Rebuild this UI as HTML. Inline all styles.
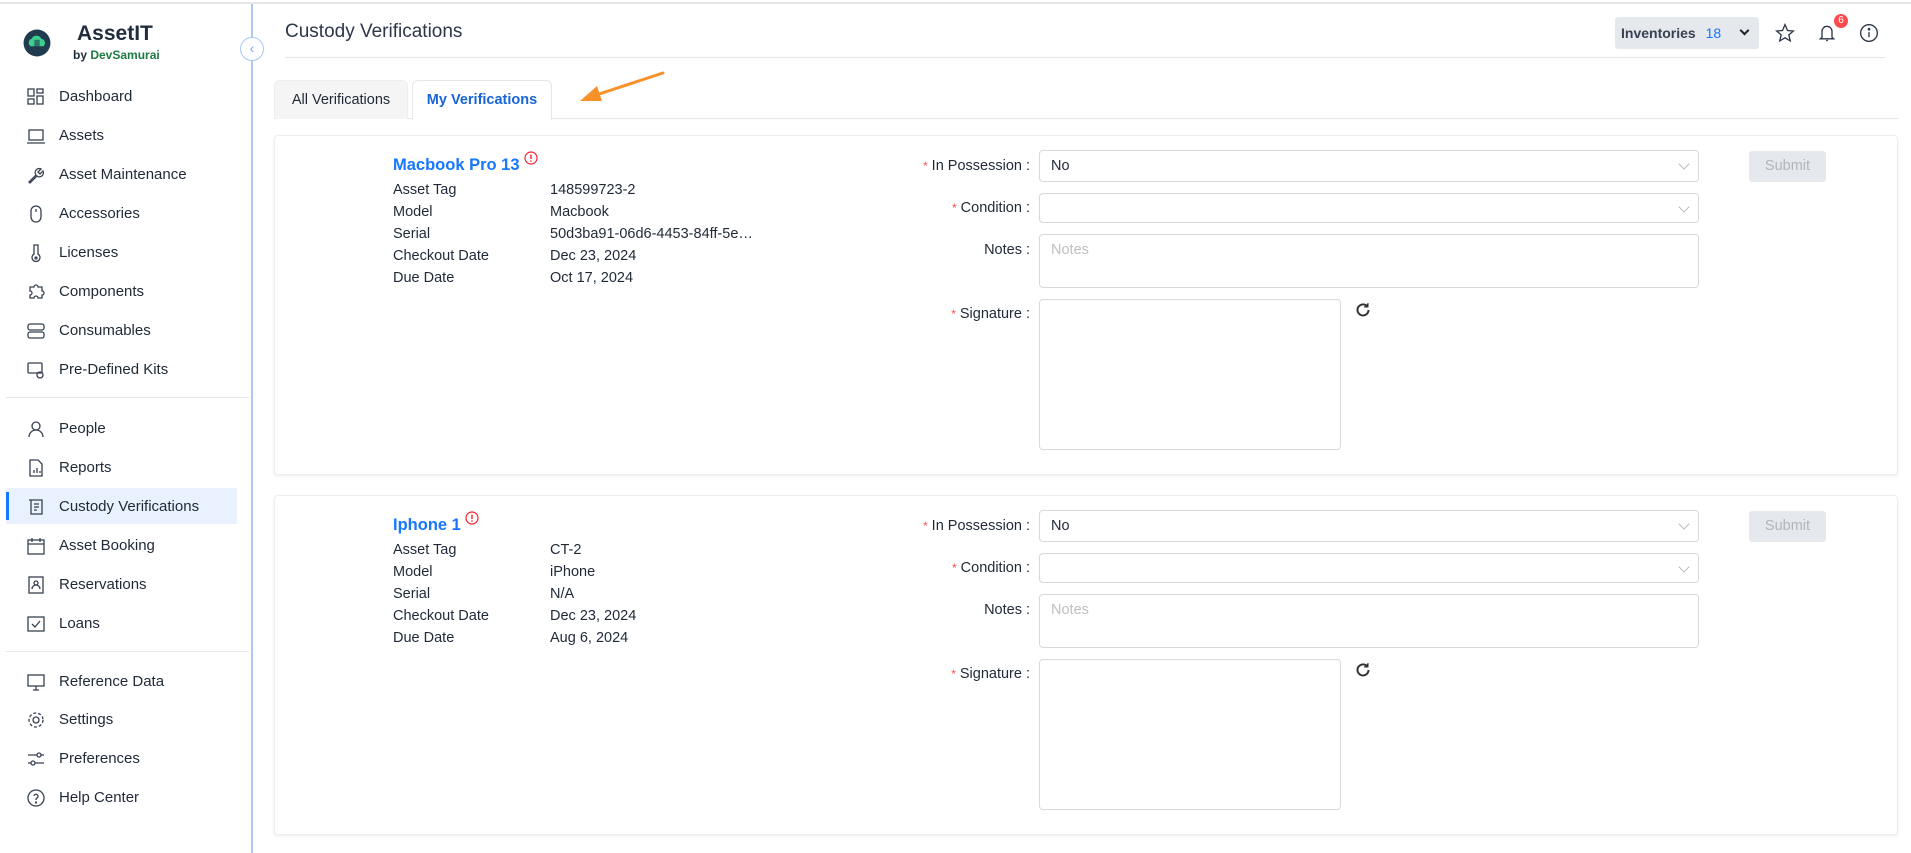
<!DOCTYPE html>
<html><head><meta charset="utf-8"><style>
*{box-sizing:border-box;margin:0;padding:0}
body{width:1911px;height:853px;overflow:hidden;background:#fff;font-family:"Liberation Sans",Arial,sans-serif;color:#1f2937;position:relative}
.a{position:absolute}
.nav{position:absolute;left:59px;font-size:15px;color:#1f2937;white-space:nowrap}
.ic{position:absolute;left:26px;width:20px;height:20px}
.lbl{position:absolute;font-size:14.5px;color:#1f2937}
.frm{position:absolute;font-size:14.5px;color:#1f2937;text-align:right;width:260px;left:770px}
.frm b{color:#ff4d4f;font-weight:normal;font-size:12px;margin-right:4px}
.box{position:absolute;left:1039px;border:1px solid #d9d9d9;border-radius:4px;background:#fff;font-size:14.5px;padding:7px 11px;color:#1f2937}
.chev{position:absolute;right:10px;top:9px;width:8px;height:8px;border-right:1px solid #bbb;border-bottom:1px solid #bbb;transform:rotate(45deg)}
</style></head><body>
<div class="a" style="left:0;top:2px;width:1911px;height:2px;background:#e5e7eb"></div>
<!-- sidebar -->
<div class="a" style="left:251px;top:4px;width:2px;height:849px;background:#a9c8f5"></div>
<svg class="a" style="left:23px;top:29px" width="28" height="28" viewBox="0 0 26 26"><circle cx="13" cy="13" r="12.5" fill="#1f3b4d"/><path d="M7 16a4 4 0 0 1 1-7 5 5 0 0 1 9 0 4 4 0 0 1 2 7z" fill="#3ecf8e"/><rect x="10.5" y="10" width="5" height="7" fill="#1f3b4d" opacity=".6"/></svg>
<div class="a" style="left:77px;top:22px;font-size:21px;font-weight:bold;color:#1f2d3d">AssetIT</div>
<div class="a" style="left:73px;top:48px;font-size:12px;font-weight:bold;color:#1f2d3d">by <span style="color:#1e7a45">DevSamurai</span></div>
<div class="a" style="left:240px;top:37px;width:24px;height:24px;border-radius:50%;border:1px solid #a9c8f5;background:#fff;color:#7aa7e6;font-size:14px;text-align:center;line-height:21px">‹</div>

<div class="a" style="left:6px;top:488px;width:231px;height:36px;background:#e8f1fd;border-radius:2px"></div>
<div class="a" style="left:6px;top:492px;width:3px;height:28px;background:#1677ff"></div>
<div class="a" style="left:6px;top:397px;width:243px;height:1px;background:#e5e7eb"></div>
<div class="a" style="left:6px;top:651px;width:243px;height:1px;background:#e5e7eb"></div>

<svg class="ic" style="top:87px" viewBox="0 0 20 20" fill="none" stroke="#374151" stroke-width="1.3"><rect x="2" y="2" width="6" height="7"/><rect x="11" y="2" width="6" height="4"/><rect x="2" y="12" width="6" height="5"/><rect x="11" y="9" width="6" height="8"/></svg>
<div class="nav" style="top:88px">Dashboard</div>
<svg class="ic" style="top:126px" viewBox="0 0 20 20" fill="none" stroke="#374151" stroke-width="1.3"><rect x="3" y="4" width="14" height="10"/><path d="M1 17h18"/></svg>
<div class="nav" style="top:127px">Assets</div>
<svg class="ic" style="top:165px" viewBox="0 0 20 20" fill="none" stroke="#374151" stroke-width="1.3"><path d="M3 17l7-7a4 4 0 0 1 5-6l-3 3 2 2 3-3a4 4 0 0 1-6 5l-7 7z"/></svg>
<div class="nav" style="top:166px">Asset Maintenance</div>
<svg class="ic" style="top:204px" viewBox="0 0 20 20" fill="none" stroke="#374151" stroke-width="1.3"><rect x="5" y="2" width="10" height="16" rx="5"/><path d="M10 5v3"/></svg>
<div class="nav" style="top:205px">Accessories</div>
<svg class="ic" style="top:243px" viewBox="0 0 20 20" fill="none" stroke="#374151" stroke-width="1.3"><path d="M8 2h4v9a4 4 0 1 1-4 0z"/><circle cx="10" cy="15" r="1"/></svg>
<div class="nav" style="top:244px">Licenses</div>
<svg class="ic" style="top:282px" viewBox="0 0 20 20" fill="none" stroke="#374151" stroke-width="1.3"><path d="M4 5h4a2 2 0 0 1 4 0h4v4a2 2 0 0 1 0 4v3h-4a2 2 0 0 0-4 0H4v-3a2 2 0 0 0 0-4z"/></svg>
<div class="nav" style="top:283px">Components</div>
<svg class="ic" style="top:321px" viewBox="0 0 20 20" fill="none" stroke="#374151" stroke-width="1.3"><rect x="2" y="3" width="16" height="6" rx="2"/><rect x="2" y="11" width="16" height="6" rx="2"/></svg>
<div class="nav" style="top:322px">Consumables</div>
<svg class="ic" style="top:360px" viewBox="0 0 20 20" fill="none" stroke="#374151" stroke-width="1.3"><rect x="2" y="3" width="14" height="10" rx="1"/><circle cx="14" cy="15" r="3"/></svg>
<div class="nav" style="top:361px">Pre-Defined Kits</div>

<svg class="ic" style="top:419px" viewBox="0 0 20 20" fill="none" stroke="#374151" stroke-width="1.3"><circle cx="10" cy="7" r="4"/><path d="M3 18a7 7 0 0 1 14 0"/></svg>
<div class="nav" style="top:420px">People</div>
<svg class="ic" style="top:458px" viewBox="0 0 20 20" fill="none" stroke="#374151" stroke-width="1.3"><path d="M4 2h8l4 4v12H4z"/><path d="M8 15v-3M11 15v-5M14 15v-2"/></svg>
<div class="nav" style="top:459px">Reports</div>
<svg class="ic" style="top:497px" viewBox="0 0 20 20" fill="none" stroke="#374151" stroke-width="1.3"><path d="M5 3h11v14H5zM3 3h4M8 7h5M8 10h5M8 13h3"/></svg>
<div class="nav" style="top:498px">Custody Verifications</div>
<svg class="ic" style="top:536px" viewBox="0 0 20 20" fill="none" stroke="#374151" stroke-width="1.3"><rect x="2" y="4" width="16" height="14"/><path d="M2 8h16M6 2v4M14 2v4"/></svg>
<div class="nav" style="top:537px">Asset Booking</div>
<svg class="ic" style="top:575px" viewBox="0 0 20 20" fill="none" stroke="#374151" stroke-width="1.3"><rect x="3" y="2" width="14" height="16"/><circle cx="10" cy="8" r="2"/><path d="M6 14a4 4 0 0 1 8 0"/></svg>
<div class="nav" style="top:576px">Reservations</div>
<svg class="ic" style="top:614px" viewBox="0 0 20 20" fill="none" stroke="#374151" stroke-width="1.3"><rect x="2" y="3" width="16" height="14"/><path d="M6 10l3 3 5-6"/></svg>
<div class="nav" style="top:615px">Loans</div>
<svg class="ic" style="top:672px" viewBox="0 0 20 20" fill="none" stroke="#374151" stroke-width="1.3"><rect x="2" y="3" width="16" height="11"/><path d="M7 18h6M10 14v4"/></svg>
<div class="nav" style="top:673px">Reference Data</div>
<svg class="ic" style="top:710px" viewBox="0 0 20 20" fill="none" stroke="#374151" stroke-width="1.3"><circle cx="10" cy="10" r="3"/><circle cx="10" cy="10" r="7" stroke-dasharray="3 2"/></svg>
<div class="nav" style="top:711px">Settings</div>
<svg class="ic" style="top:749px" viewBox="0 0 20 20" fill="none" stroke="#374151" stroke-width="1.3"><path d="M2 6h9M15 6h3M2 14h3M9 14h9"/><circle cx="13" cy="6" r="2"/><circle cx="7" cy="14" r="2"/></svg>
<div class="nav" style="top:750px">Preferences</div>
<svg class="ic" style="top:788px" viewBox="0 0 20 20" fill="none" stroke="#374151" stroke-width="1.3"><circle cx="10" cy="10" r="8"/><path d="M8 8a2 2 0 1 1 3 2c-1 .5-1 1-1 2"/><circle cx="10" cy="14.5" r=".5"/></svg>
<div class="nav" style="top:789px">Help Center</div>

<!-- header -->
<div class="a" style="left:285px;top:21px;font-size:19px;color:#2d3748">Custody Verifications</div>
<div class="a" style="left:285px;top:57px;width:1600px;height:1px;background:#e5e7eb"></div>
<div class="a" style="left:1615px;top:17px;width:144px;height:32px;background:#e5e9ee;border-radius:3px"></div>
<div class="a" style="left:1621px;top:25px;font-size:14px;font-weight:bold;color:#374151">Inventories <span style="color:#1677ff;font-weight:normal;margin-left:6px">18</span></div>
<div class="a" style="left:1741px;top:27px;width:7px;height:7px;border-right:2px solid #222;border-bottom:2px solid #222;transform:rotate(45deg)"></div>
<svg class="a" style="left:1775px;top:23px" width="20" height="20" viewBox="0 0 24 24" fill="none" stroke="#2d3748" stroke-width="1.6"><path d="M12 2l3 7 7 .6-5.4 4.7 1.7 7.2L12 17.8 5.7 21.5l1.7-7.2L2 9.6 9 9z"/></svg>
<svg class="a" style="left:1817px;top:23px" width="20" height="20" viewBox="0 0 24 24" fill="none" stroke="#2d3748" stroke-width="1.6"><path d="M6 17V10a6 6 0 0 1 12 0v7l2 2H4z"/><path d="M11 21h2"/></svg>
<div class="a" style="left:1834px;top:14px;width:14px;height:14px;border-radius:50%;background:#ff4d4f;color:#fff;font-size:10px;text-align:center;line-height:14px">6</div>
<svg class="a" style="left:1859px;top:23px" width="20" height="20" viewBox="0 0 24 24" fill="none" stroke="#2d3748" stroke-width="1.6"><circle cx="12" cy="12" r="10"/><path d="M12 11v6"/><circle cx="12" cy="7.5" r=".8" fill="#2d3748"/></svg>

<!-- tabs -->
<div class="a" style="left:274px;top:118px;width:1624px;height:1px;background:#e5e7eb"></div>
<div class="a" style="left:274px;top:80px;width:134px;height:39px;background:#f5f5f5;border:1px solid #eceef0;border-bottom:none;border-radius:6px 6px 0 0;font-size:14.5px;color:#1f2937;text-align:center;line-height:38px">All Verifications</div>
<div class="a" style="left:412px;top:80px;width:140px;height:40px;background:#fff;border:1px solid #e5e7eb;border-bottom:none;border-radius:6px 6px 0 0;font-size:14.5px;color:#1765d6;font-weight:bold;text-align:center;line-height:38px">My Verifications</div>
<svg class="a" style="left:575px;top:68px" width="95" height="40" viewBox="0 0 95 40"><path d="M88 5 L18 28" stroke="#f7922a" stroke-width="3" stroke-linecap="round"/><path d="M5 33 L22 18 L27 33z" fill="#f7922a"/></svg>

<!-- cards -->
<div id="cards"></div>
<script>
const data=[["Macbook Pro 13","148599723-2","Macbook","50d3ba91-06d6-4453-84ff-5e…","Dec 23, 2024","Oct 17, 2024"],["Iphone 1","CT-2","iPhone","N/A","Dec 23, 2024","Aug 6, 2024"]];
let h="";
data.forEach((d,i)=>{const o=i*360;
h+=`<div class="a" style="left:274px;top:${135+o}px;width:1624px;height:340px;border:1px solid #eceef0;border-radius:4px;box-shadow:0 1px 3px rgba(0,0,0,.08);background:#fff"></div>
<div class="a" style="left:393px;top:${151+o}px;font-size:16.5px;font-weight:bold;color:#1677ff">${d[0]} <svg width="14" height="14" viewBox="0 0 14 14" style="vertical-align:5px"><circle cx="7" cy="7" r="6" fill="none" stroke="#f5222d" stroke-width="1.2"/><path d="M7 3.5v4.5" stroke="#f5222d" stroke-width="1.4"/><circle cx="7" cy="10" r=".8" fill="#f5222d"/></svg></div>`;
["Asset Tag","Model","Serial","Checkout Date","Due Date"].forEach((l,j)=>{
h+=`<div class="lbl" style="left:393px;top:${182+o+j*22}px">${l}</div><div class="lbl" style="left:550px;top:${182+o+j*22}px">${d[j+1]}</div>`;});
h+=`<div class="frm" style="top:${158+o}px"><b>*</b>In Possession :</div>
<div class="box" style="top:${150+o}px;width:660px;height:32px">No<div class="chev"></div></div>
<div class="frm" style="top:${200+o}px"><b>*</b>Condition :</div>
<div class="box" style="top:${193+o}px;width:660px;height:30px"><div class="chev"></div></div>
<div class="frm" style="top:${242+o}px">Notes :</div>
<div class="box" style="top:${234+o}px;width:660px;height:54px;color:#bfbfbf">Notes</div>
<div class="frm" style="top:${306+o}px"><b>*</b>Signature :</div>
<div class="box" style="top:${299+o}px;width:302px;height:151px"></div>
<svg class="a" style="left:1354px;top:${301+o}px" width="18" height="18" viewBox="0 0 18 18" fill="none" stroke="#333" stroke-width="2"><path d="M14.5 9A5.5 5.5 0 1 1 12.5 4.7"/><path d="M14 2v4h-4" fill="#333" stroke-width="1"/></svg>
<div class="a" style="left:1749px;top:${151+o}px;width:77px;height:31px;background:#e5e9ee;border-radius:3px;color:#b0b5bb;font-size:14.5px;text-align:center;line-height:31px">Submit</div>`;});
document.getElementById("cards").innerHTML=h;
</script>
</body></html>
